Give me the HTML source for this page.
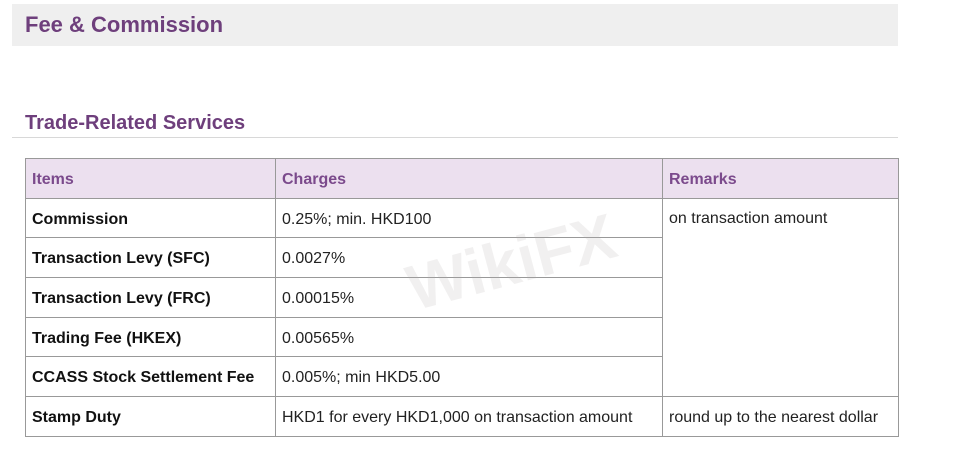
<!DOCTYPE html>
<html><head><style>
body{margin:0;width:977px;height:462px;background:#fff;font-family:"Liberation Sans",Arial,sans-serif;position:relative;overflow:hidden}
.hd{position:absolute;left:12px;top:4px;width:886px;height:42px;background:#efefef}
.hd span{position:absolute;left:13px;top:8px;font-size:22px;font-weight:bold;color:#6e3f7c}
.sub{position:absolute;left:25px;top:112px;font-size:20px;font-weight:bold;color:#6e3f7c}
.line{position:absolute;left:12px;top:137px;width:886px;height:1px;background:#d8d8d8}
table{position:absolute;left:25px;top:158px;border-collapse:collapse;font-size:16px;color:#222}
td,th{border:1px solid #999;padding:3px 6px 0;height:35.7px;text-align:left;vertical-align:middle}
th{background:#ece0ef;color:#7b4a8c;font-weight:bold}
td.b{font-weight:bold;color:#111}
td.top{vertical-align:top;padding-top:11px}
.wm{position:absolute;font-size:64px;font-weight:bold;color:rgba(180,170,170,0.18);transform:rotate(-15deg)}
</style></head><body>
<div class="hd"><span>Fee &amp; Commission</span></div>
<div class="sub">Trade-Related Services</div>
<div class="line"></div>
<table>
<tr><th style="width:237px">Items</th><th style="width:374px">Charges</th><th style="width:223px">Remarks</th></tr>
<tr><td class="b">Commission</td><td>0.25%; min. HKD100</td><td rowspan="5" class="top">on transaction amount</td></tr>
<tr><td class="b">Transaction Levy (SFC)</td><td>0.0027%</td></tr>
<tr><td class="b">Transaction Levy (FRC)</td><td>0.00015%</td></tr>
<tr><td class="b">Trading Fee (HKEX)</td><td>0.00565%</td></tr>
<tr><td class="b">CCASS Stock Settlement Fee</td><td>0.005%; min HKD5.00</td></tr>
<tr><td class="b">Stamp Duty</td><td>HKD1 for every HKD1,000 on transaction amount</td><td>round up to the nearest dollar</td></tr>
</table>
<div class="wm" style="left:405px;top:225px">WikiFX</div>
</body></html>
